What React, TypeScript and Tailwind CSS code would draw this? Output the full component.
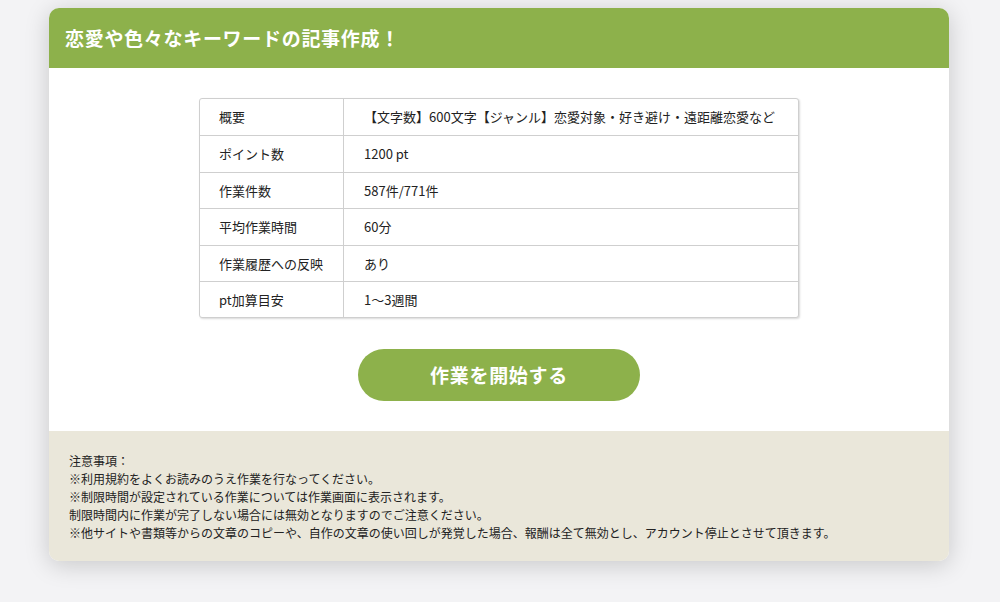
import React from "react";

const rows: [string, string][] = [
  ["概要", "【文字数】600文字【ジャンル】恋愛対象・好き避け・遠距離恋愛など"],
  ["ポイント数", "1200 pt"],
  ["作業件数", "587件/771件"],
  ["平均作業時間", "60分"],
  ["作業履歴への反映", "あり"],
  ["pt加算目安", "1〜3週間"],
];

export default function App() {
  return (
    <div
      className="w-[1000px] h-[602px] bg-[#f3f3f5] pt-[8px] overflow-hidden"
      style={{ fontFamily: '"Noto Sans CJK JP", "Noto Sans", sans-serif' }}
    >
      <div className="mx-[49px] w-[900px] rounded-[10px] overflow-hidden bg-white shadow-[0_4px_24px_rgba(0,0,0,0.18)]">
        <div className="h-[60px] bg-[#8db14b] flex items-center pl-[16px]">
          <h1 className="text-white font-bold text-[19px] tracking-[0.7px]">
            恋愛や色々なキーワードの記事作成！
          </h1>
        </div>
        <div className="pt-[30px] pb-[30px] flex flex-col items-center">
          <div className="w-[600px] border border-[#cfcfcf] rounded-[3px] shadow-[1px_1px_2px_rgba(0,0,0,0.15)] bg-white">
            {rows.map(([k, v], i) => (
              <div
                key={k}
                className={`flex h-[36.4px] text-[13px] text-[#222] ${i > 0 ? "border-t border-[#cfcfcf]" : ""}`}
              >
                <div className="w-[144px] shrink-0 border-r border-[#cfcfcf] pl-[19px] flex items-center">
                  {k}
                </div>
                <div className="pl-[20px] flex items-center whitespace-nowrap">{v}</div>
              </div>
            ))}
          </div>
          <button className="mt-[31px] w-[282px] h-[52px] rounded-full bg-[#8db14b] text-white font-bold text-[19px] tracking-[0.7px]">
            作業を開始する
          </button>
        </div>
        <div className="bg-[#eae7da] px-[20px] pt-[21px] pb-[19px] text-[12px] leading-[18px] text-[#222]">
          <p>注意事項：</p>
          <p>※利用規約をよくお読みのうえ作業を行なってください。</p>
          <p>※制限時間が設定されている作業については作業画面に表示されます。</p>
          <p>制限時間内に作業が完了しない場合には無効となりますのでご注意ください。</p>
          <p>※他サイトや書類等からの文章のコピーや、自作の文章の使い回しが発覚した場合、報酬は全て無効とし、アカウント停止とさせて頂きます。</p>
        </div>
      </div>
    </div>
  );
}
